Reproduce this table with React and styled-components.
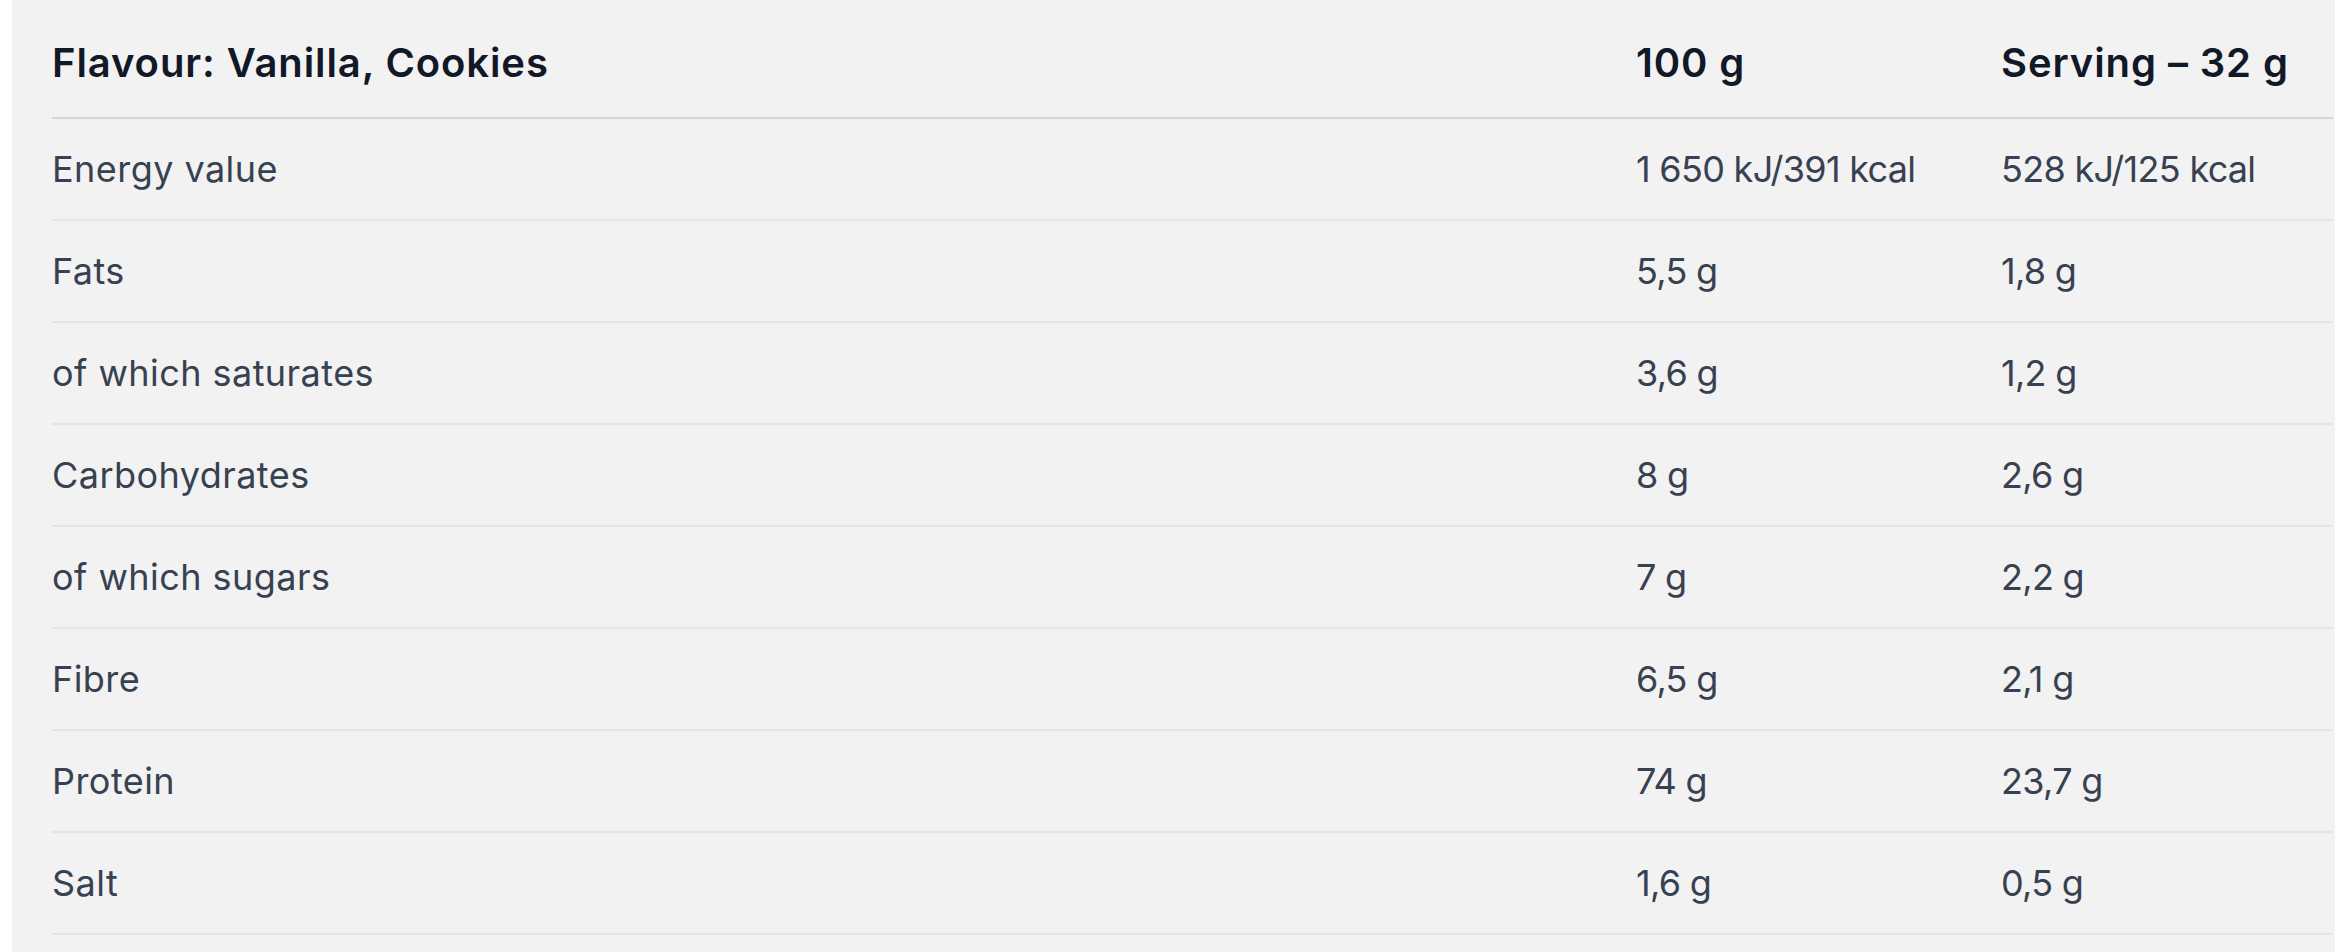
import React from 'react';
import styled, { createGlobalStyle } from 'styled-components';

const GlobalStyle = createGlobalStyle`
  html, body {
    margin: 0;
    padding: 0;
    background: #ffffff;
  }
  body {
    font-family: Inter, "Noto Sans", "Liberation Sans", sans-serif;
  }
`;

const Page = styled.div`
  padding-left: 12px;
  min-height: 100vh;
  background: #ffffff;
`;

const Panel = styled.section`
  background: #f2f2f2;
  min-height: 100vh;
  padding: 0 2px 0 40px;
  box-sizing: border-box;
`;

const Table = styled.div`
  display: flex;
  flex-direction: column;
`;

const Row = styled.div`
  display: grid;
  grid-template-columns: 1fr 365px 332px;
  box-sizing: border-box;
  height: ${props => (props.$head ? '119px' : '102px')};
  padding-top: ${props => (props.$head ? '39px' : '0')};
  align-items: ${props => (props.$head ? 'start' : 'center')};
  border-bottom: 2px solid ${props => (props.$head ? '#d3d5da' : '#e4e5e8')};
`;

const HeadCell = styled.div`
  font-size: 40px;
  line-height: 48px;
  font-weight: 600;
  color: #111827;
  white-space: nowrap;
  letter-spacing: 0.9px;
`;

const Cell = styled.div`
  font-size: 36px;
  line-height: 44px;
  font-weight: 400;
  color: #374151;
  white-space: nowrap;
  letter-spacing: ${props => (props.$value ? '-0.7px' : '0.45px')};
`;

const rows = [
  ['Energy value', '1 650 kJ/391 kcal', '528 kJ/125 kcal'],
  ['Fats', '5,5 g', '1,8 g'],
  ['of which saturates', '3,6 g', '1,2 g'],
  ['Carbohydrates', '8 g', '2,6 g'],
  ['of which sugars', '7 g', '2,2 g'],
  ['Fibre', '6,5 g', '2,1 g'],
  ['Protein', '74 g', '23,7 g'],
  ['Salt', '1,6 g', '0,5 g'],
];

const App = () => {
  return (
    <>
      <GlobalStyle />
      <Page>
        <Panel>
          <Table>
            <Row $head>
              <HeadCell>Flavour: Vanilla, Cookies</HeadCell>
              <HeadCell>100 g</HeadCell>
              <HeadCell>Serving – 32 g</HeadCell>
            </Row>
            {rows.map((r) => (
              <Row key={r[0]}>
                <Cell>{r[0]}</Cell>
                <Cell $value>{r[1]}</Cell>
                <Cell $value>{r[2]}</Cell>
              </Row>
            ))}
          </Table>
        </Panel>
      </Page>
    </>
  );
};

export default App;
